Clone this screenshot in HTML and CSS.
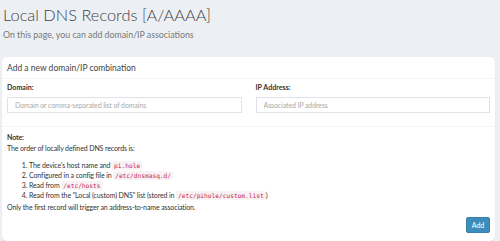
FILE: index.html
```html
<!DOCTYPE html>
<html lang="en">
<head>
    <meta charset="UTF-8">
    <title>Local DNS Records</title>
    <link rel="stylesheet" href="styles.css">
</head>
<body>
    <div class="content-header">
        <h1>Local DNS Records [A/AAAA]</h1>
        <small>On this page, you can add domain/IP associations</small>
    </div>

    <div class="box">
        <div class="box-header">
            <h3 class="box-title">Add a new domain/IP combination</h3>
        </div>
        <div class="box-body">
            <div class="row">
                <div class="form-group">
                    <label for="domain">Domain:</label>
                    <input id="domain" type="text" class="form-control" placeholder="Domain or comma-separated list of domains">
                </div>
                <div class="form-group">
                    <label for="ip">IP Address:</label>
                    <input id="ip" type="text" class="form-control" placeholder="Associated IP address">
                </div>
            </div>
        </div>
        <div class="box-footer">
            <strong>Note:</strong>
            <p>The order of locally defined DNS records is:</p>
            <ol>
                <li>The device's host name and <code>pi.hole</code></li>
                <li>Configured in a config file in <code>/etc/dnsmasq.d/</code></li>
                <li>Read from <code>/etc/hosts</code></li>
                <li>Read from the "Local (custom) DNS" list (stored in <code>/etc/pihole/custom.list</code>)</li>
            </ol>
            <p>Only the first record will trigger an address-to-name association.</p>
            <div class="actions">
                <button class="btn btn-primary">Add</button>
            </div>
        </div>
    </div>
</body>
</html>
```

FILE: styles.css
```css
* {
    margin: 0;
    padding: 0;
    box-sizing: border-box;
}

body {
    font-family: 'Source Sans Pro', 'Lato', 'Open Sans', sans-serif;
    font-size: 7px;
    letter-spacing: -0.12px;
    color: #333;
    background: #ecf0f5;
    padding: 3px 5px 0 2px;
}

.content-header {
    padding-left: 1px;
    height: 54px;
    letter-spacing: 0;
}

h1 {
    font-size: 16.4px;
    font-weight: 300;
    line-height: 24px;
    color: #444;
}

.content-header small {
    display: block;
    font-size: 8.8px;
    line-height: 14px;
    color: #777;
    margin-top: 1px;
}

.box {
    background: #fff;
    border-radius: 5px;
    box-shadow: 0 1px 1px rgba(0, 0, 0, 0.08);
}

.box-header {
    padding: 0 5px;
    height: 22px;
    display: flex;
    align-items: center;
    border-bottom: 1px solid #f4f4f4;
}

.box-title {
    font-size: 8.5px;
    font-weight: 400;
    letter-spacing: 0;
    color: #444;
}

.box-body {
    padding: 4px 5px 0;
    height: 48px;
    border-bottom: 1px solid #f4f4f4;
}

.row {
    display: grid;
    grid-template-columns: 1fr 1fr;
    gap: 14px;
}

.form-group label {
    display: block;
    font-weight: 700;
    font-size: 7.1px;
    letter-spacing: 0;
    line-height: 10px;
    margin-bottom: 4px;
}

.form-control {
    width: 100%;
    height: 16px;
    border: 1px solid #dfe2e8;
    padding: 0 7px;
    font-family: inherit;
    font-size: 7px;
    letter-spacing: -0.1px;
    color: #555;
}

.form-control::placeholder {
    color: #aaa;
}

.box-footer {
    padding: 5px 5px 8px;
    line-height: 11px;
}

.box-footer strong {
    display: block;
}

ol {
    margin: 6px 0 2px 22px;
    line-height: 10px;
}

code {
    font-family: 'DejaVu Sans Mono', monospace;
    font-size: 6.2px;
    letter-spacing: 0;
    line-height: 1;
    color: #c7254e;
    background: #f9f2f4;
    padding: 1px 2px;
    border-radius: 2px;
}

.actions {
    display: flex;
    justify-content: flex-end;
    margin-top: 4px;
}

.btn {
    font-family: inherit;
    font-size: 7px;
    letter-spacing: 0;
    height: 16px;
    width: 24px;
    border: 1px solid #367fa9;
    border-radius: 2px;
    cursor: pointer;
}

.btn-primary {
    background: #3c8dbc;
    color: #fff;
}
```
